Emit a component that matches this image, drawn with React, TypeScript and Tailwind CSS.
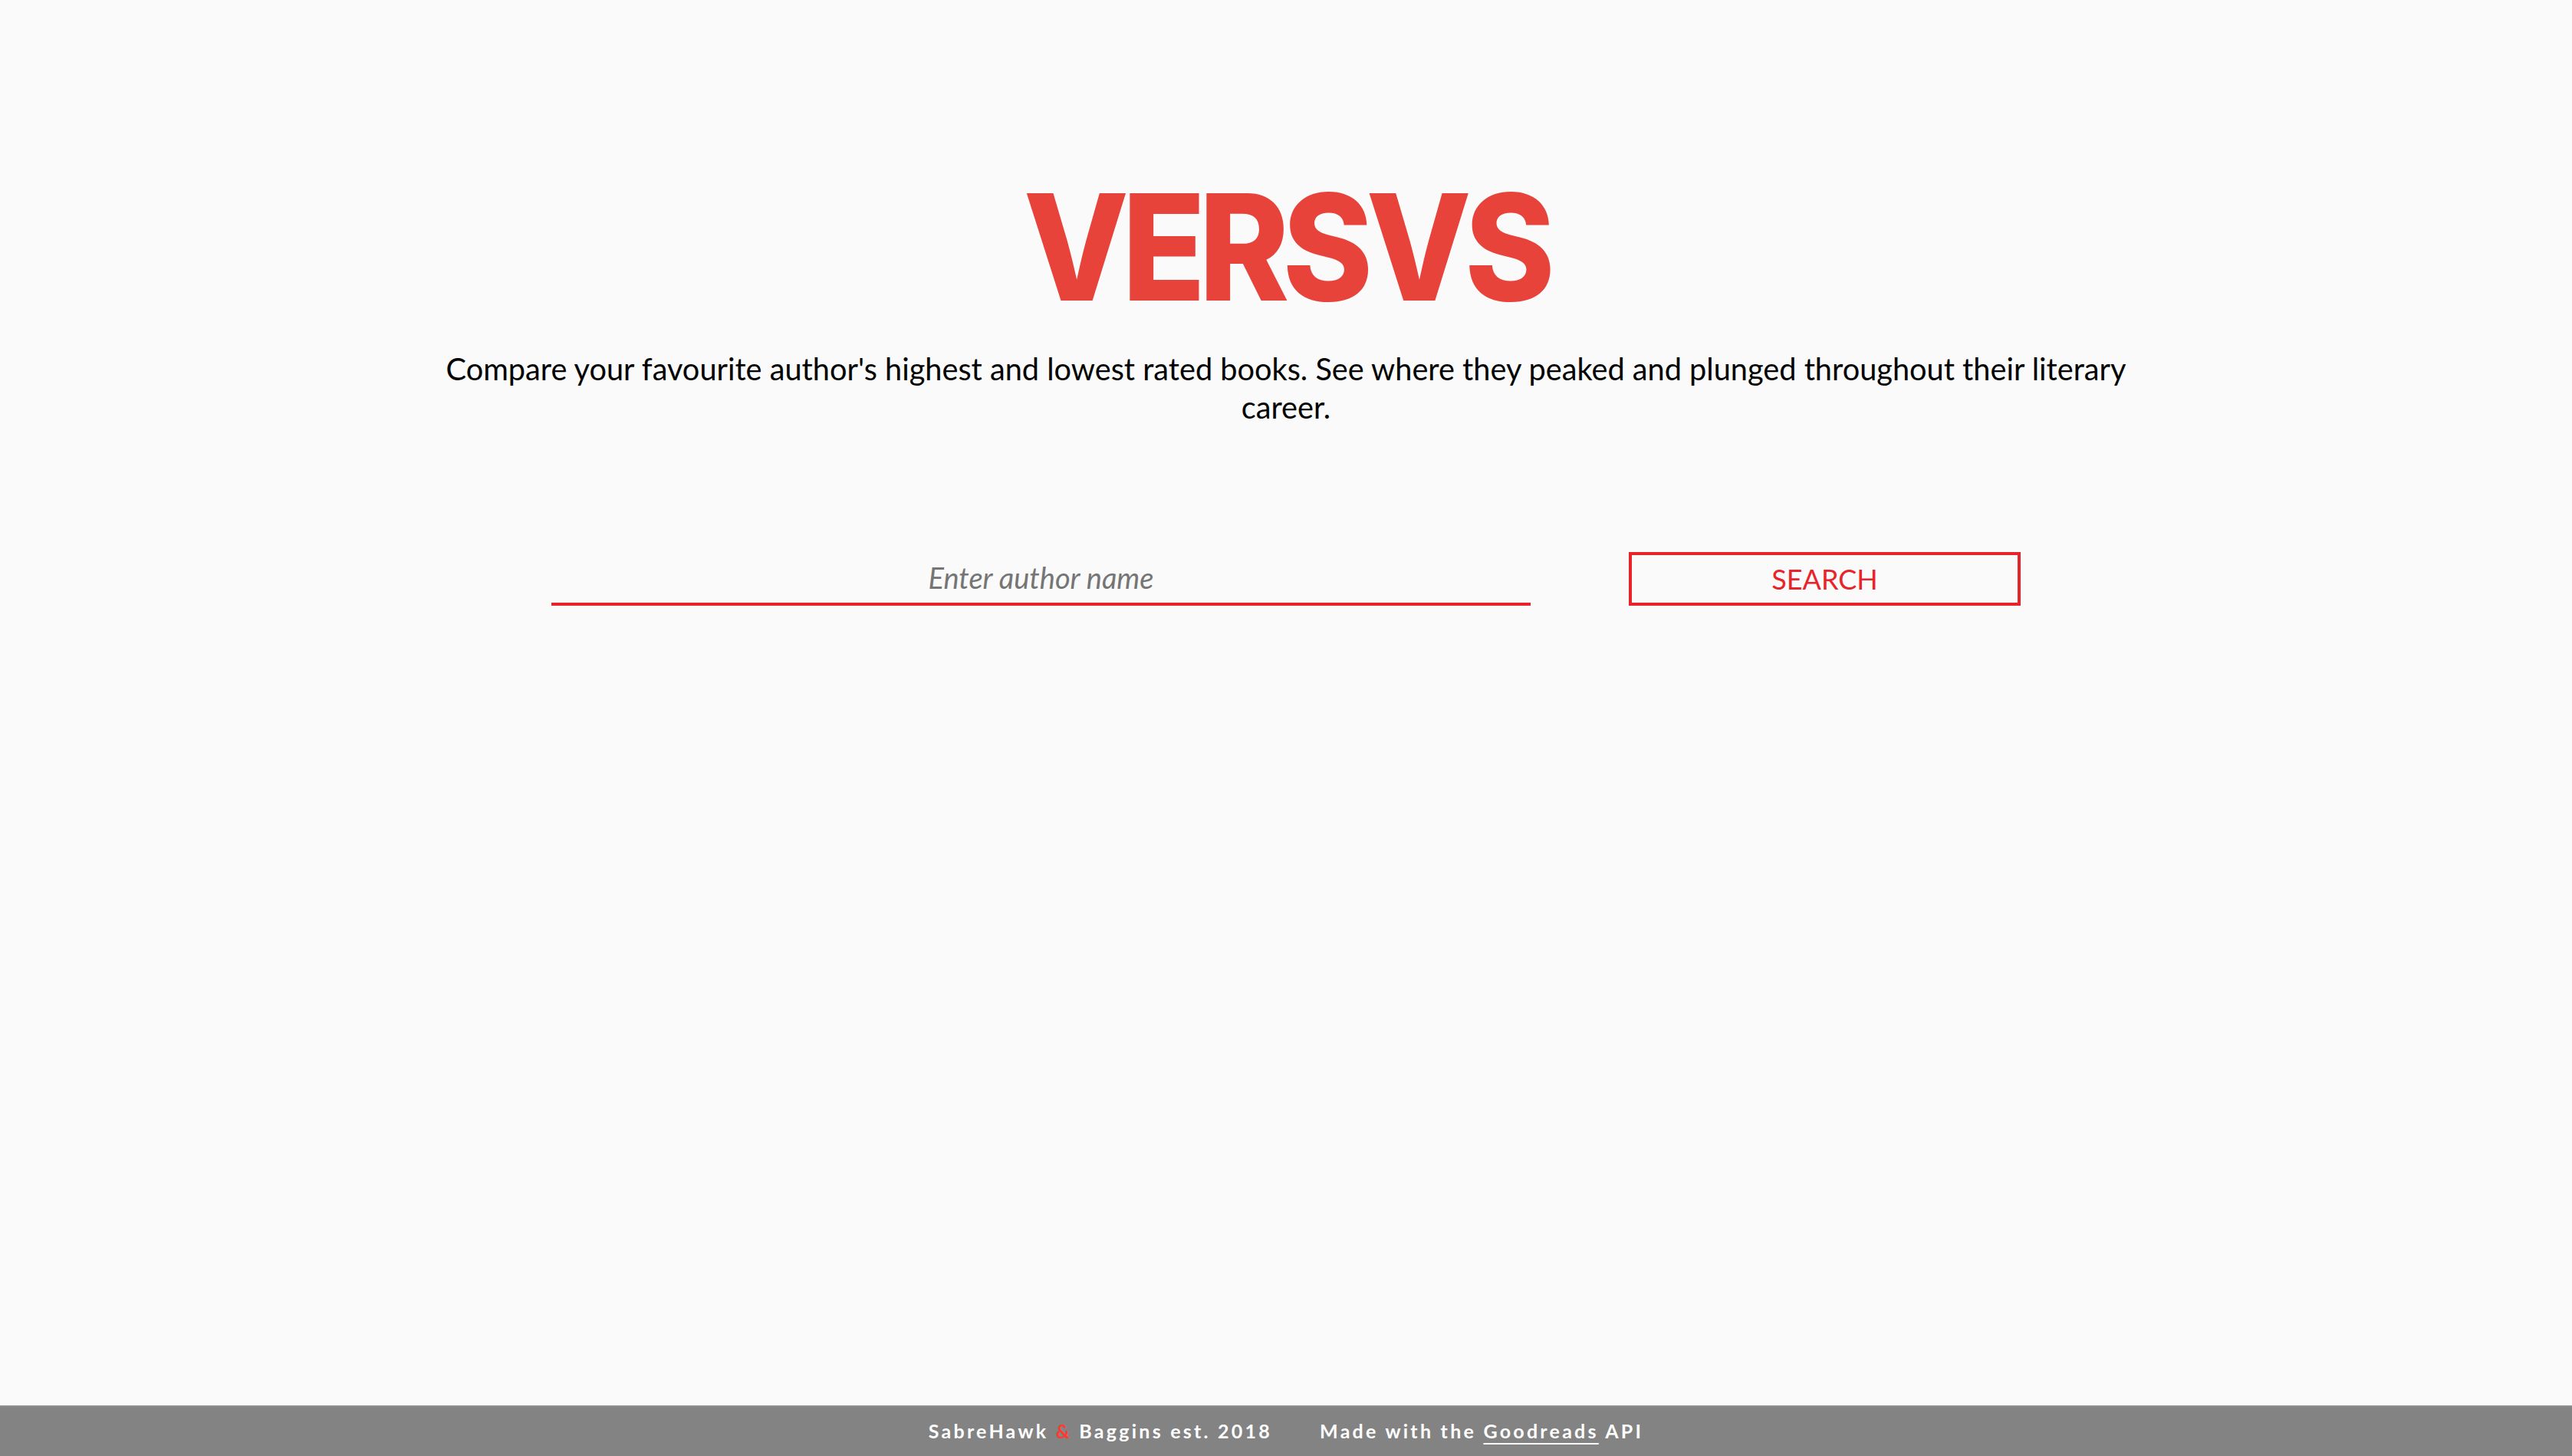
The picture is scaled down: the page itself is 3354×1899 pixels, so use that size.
import React from "react";

export default function App() {
  return (
    <div className="min-h-screen flex flex-col bg-[#fafafa]" style={{ fontFamily: "Lato, 'Noto Sans', sans-serif" }}>
      <main className="flex-1 flex flex-col items-center">
        <h1
          className="mt-[226px] text-[#e8433a] text-[192px] leading-none font-extrabold tracking-[-0.05em] scale-x-[0.93]"
          style={{ fontFamily: "Inter, Roboto, sans-serif" }}
        >
          VERSVS
        </h1>
        <p className="mt-[38px] w-[2236px] text-center text-[39.7px] leading-[50px] text-black">
          Compare your favourite author's highest and lowest rated books. See where they peaked and plunged throughout their literary career.
        </p>
        <div className="mt-[164px] flex items-end gap-[128px]">
          <div className="w-[1277px] border-b-4 border-[#e8232a] flex justify-center pb-[4px]">
            <input
              className="w-full text-center text-[38px] italic bg-transparent outline-none placeholder:text-[#757575] text-black"
              placeholder="Enter author name"
            />
          </div>
          <button className="w-[511px] h-[70px] border-4 border-[#e8232a] text-[#e8232a] text-[36px] bg-transparent">
            SEARCH
          </button>
        </div>
      </main>
      <footer className="h-[66px] bg-[#838383] border-t-2 border-[#8e8e8e] flex items-center justify-center gap-[62px] text-white text-[25px] font-bold tracking-[0.13em]">
        <span>
          SabreHawk <span className="text-[#ff3b30]">&amp;</span> Baggins est. 2018
        </span>
        <span>
          Made with the <span className="underline underline-offset-[6px]">Goodreads</span> API
        </span>
      </footer>
    </div>
  );
}
